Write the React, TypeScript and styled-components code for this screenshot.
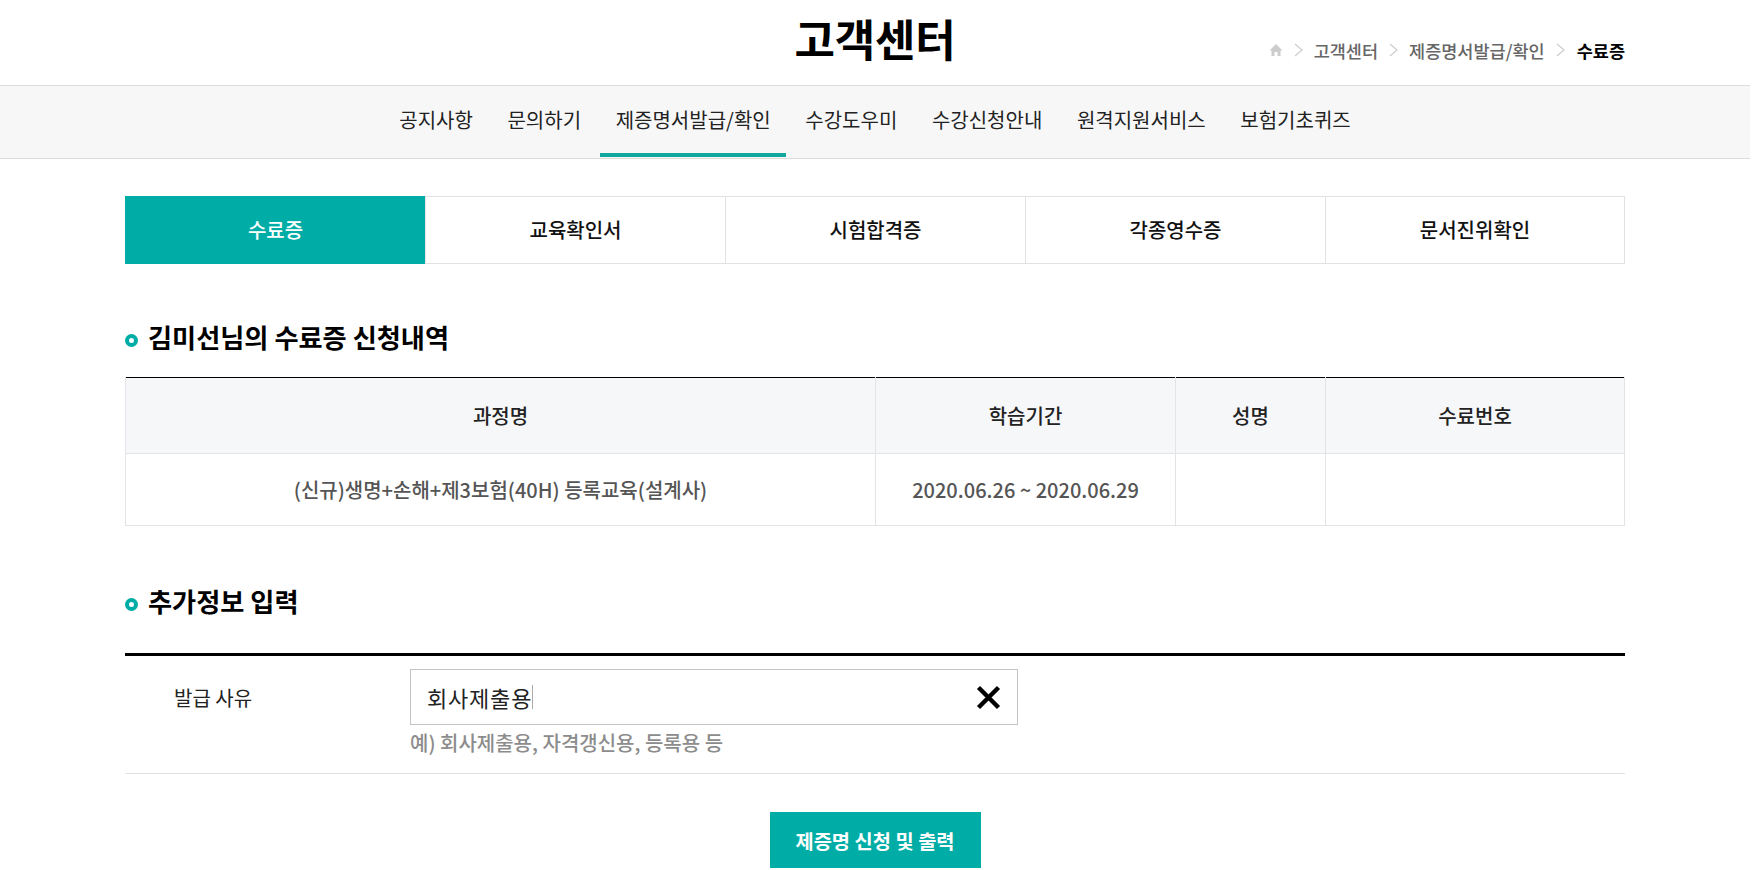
import styled, { createGlobalStyle } from 'styled-components';

const GlobalStyle = createGlobalStyle`
  html, body {
    margin: 0;
    padding: 0;
    background: #fff;
    font-family: "Noto Sans CJK KR", "Noto Sans", sans-serif;
    overflow: hidden;
  }
  * {
    box-sizing: border-box;
  }
`;

const Page = styled.div`
  width: 1750px;
  height: 870px;
  overflow: hidden;
`;

const Header = styled.header`
  height: 86px;
  border-bottom: 1px solid #dcdcdc;
`;

const HeaderInner = styled.div`
  width: 1500px;
  height: 85px;
  margin: 0 auto;
  display: flex;
  justify-content: center;
  position: relative;
`;

const PageTitle = styled.h1`
  margin: 0;
  padding-top: 6px;
  font-size: 44px;
  line-height: 64px;
  font-weight: 700;
  color: #000;
  letter-spacing: -0.2px;
`;

const Breadcrumb = styled.nav`
  position: absolute;
  right: 0;
  top: 38px;
  display: flex;
  align-items: center;
  height: 24px;
  font-size: 17.5px;
  font-weight: 500;
  color: #666;
`;

const CrumbSeparator = styled.svg`
  width: 9px;
  height: 14px;
  margin: 0 11px;
`;

const CrumbCurrent = styled.span`
  margin-left: 1px;
  color: #000;
  font-weight: 700;
`;

const SubNav = styled.nav`
  height: 73px;
  background: #f7f7f7;
  border-bottom: 1px solid #dcdcdc;
  display: flex;
  justify-content: center;
`;

const SubNavItem = styled.a<{ $active?: boolean }>`
  height: 71px;
  margin: 0 1.8px;
  padding: 0 15.5px 1px;
  display: flex;
  align-items: center;
  font-size: 20px;
  color: #222;
  border-bottom: 4px solid ${(p) => (p.$active ? '#13a89e' : 'transparent')};
`;

const Content = styled.main`
  width: 1500px;
  margin: 0 auto;
  padding-top: 37px;
`;

const Tabs = styled.div`
  display: grid;
  grid-template-columns: repeat(5, 300px);
  height: 68px;
`;

const Tab = styled.a<{ $active?: boolean }>`
  display: flex;
  align-items: center;
  justify-content: center;
  padding-bottom: 2px;
  font-size: 20px;
  font-weight: 500;
  color: ${(p) => (p.$active ? '#fff' : '#111')};
  background: ${(p) => (p.$active ? '#00ada6' : '#fff')};
  border: 1px solid ${(p) => (p.$active ? '#00ada6' : '#e2e2e2')};
  border-right: none;
  &:last-child {
    border-right: 1px solid #e2e2e2;
  }
`;

const SectionTitle = styled.h2<{ $top: number; $bottom: number }>`
  margin: ${(p) => p.$top}px 0 ${(p) => p.$bottom}px;
  height: 40px;
  display: flex;
  align-items: center;
  gap: 10px;
  font-size: 26.2px;
  font-weight: 700;
  color: #000;
`;

const TitleDot = styled.i`
  width: 13px;
  height: 13px;
  margin-top: 7px;
  border-radius: 50%;
  border: 4px solid #00ada6;
  background: #fff;
`;

const Table = styled.table`
  width: calc(100% - 1px);
  border-collapse: collapse;
  table-layout: fixed;
  border-top: 1px solid #000;
`;

const HeadCell = styled.th<{ $width: number }>`
  width: ${(p) => p.$width}px;
  height: 76px;
  padding: 0;
  background: #f6f7f9;
  border: 1px solid #e2e4e8;
  border-top: none;
  font-size: 20px;
  font-weight: 500;
  color: #222;
`;

const BodyCell = styled.td`
  height: 72px;
  padding: 0;
  border: 1px solid #e2e4e8;
  text-align: center;
  font-size: 20px;
  font-weight: 500;
  color: #555;
`;

const FormRow = styled.div`
  display: flex;
  height: 121px;
  border-top: 3px solid #000;
  border-bottom: 1px solid #e2e2e2;
  padding-top: 13px;
`;

const FormLabel = styled.div`
  width: 285px;
  padding-left: 49px;
  height: 56px;
  display: flex;
  align-items: center;
  font-size: 20px;
  color: #222;
`;

const FieldColumn = styled.div`
  width: 608px;
`;

const Field = styled.div`
  height: 56px;
  border: 1px solid #c4c4c4;
  padding: 0 16px;
  display: flex;
  align-items: center;
  justify-content: space-between;
  font-size: 22px;
  color: #222;
  letter-spacing: 0.8px;
`;

const FieldValue = styled.span`
  border-right: 1px solid #aaa;
  line-height: 24px;
`;

const ClearIcon = styled.svg`
  width: 25px;
  height: 25px;
`;

const Hint = styled.div`
  margin-top: 4px;
  font-size: 20px;
  line-height: 28px;
  color: #8c8c8c;
  font-weight: 500;
`;

const ButtonRow = styled.div`
  display: flex;
  justify-content: center;
  padding-top: 38px;
`;

const SubmitButton = styled.button`
  width: 211px;
  height: 56px;
  border: none;
  padding: 0;
  background: #00ada6;
  color: #fff;
  font-family: inherit;
  font-size: 19.8px;
  font-weight: 700;
`;

const Separator = () => (
  <CrumbSeparator viewBox="0 0 9 14">
    <path d="M1 1l7 6-7 6" fill="none" stroke="#ccc" strokeWidth="1.2" />
  </CrumbSeparator>
);

const navItems = ['공지사항', '문의하기', '제증명서발급/확인', '수강도우미', '수강신청안내', '원격지원서비스', '보험기초퀴즈'];
const tabItems = ['수료증', '교육확인서', '시험합격증', '각종영수증', '문서진위확인'];

const App = () => {
  return (
    <Page>
      <GlobalStyle />
      <Header>
        <HeaderInner>
          <PageTitle>고객센터</PageTitle>
          <Breadcrumb>
            <svg width="14" height="14" viewBox="0 0 14 14">
              <path d="M7 1L0.5 7.5H2.5V13H5.5V9H8.5V13H11.5V7.5H13.5z" fill="#ccc" />
            </svg>
            <Separator />
            <span>고객센터</span>
            <Separator />
            <span>제증명서발급/확인</span>
            <Separator />
            <CrumbCurrent>수료증</CrumbCurrent>
          </Breadcrumb>
        </HeaderInner>
      </Header>
      <SubNav>
        {navItems.map((item) => (
          <SubNavItem key={item} $active={item === '제증명서발급/확인'}>
            {item}
          </SubNavItem>
        ))}
      </SubNav>
      <Content>
        <Tabs>
          {tabItems.map((item, i) => (
            <Tab key={item} $active={i === 0}>
              {item}
            </Tab>
          ))}
        </Tabs>
        <SectionTitle $top={53} $bottom={20}>
          <TitleDot />
          김미선님의 수료증 신청내역
        </SectionTitle>
        <Table>
          <thead>
            <tr>
              <HeadCell $width={750}>과정명</HeadCell>
              <HeadCell $width={300}>학습기간</HeadCell>
              <HeadCell $width={150}>성명</HeadCell>
              <HeadCell $width={299}>수료번호</HeadCell>
            </tr>
          </thead>
          <tbody>
            <tr>
              <BodyCell>(신규)생명+손해+제3보험(40H) 등록교육(설계사)</BodyCell>
              <BodyCell>2020.06.26 ~ 2020.06.29</BodyCell>
              <BodyCell />
              <BodyCell />
            </tr>
          </tbody>
        </Table>
        <SectionTitle $top={55} $bottom={32}>
          <TitleDot />
          추가정보 입력
        </SectionTitle>
        <FormRow>
          <FormLabel>발급 사유</FormLabel>
          <FieldColumn>
            <Field>
              <FieldValue>회사제출용</FieldValue>
              <ClearIcon viewBox="0 0 25 25">
                <path d="M2.5 2.5L22.5 22.5M22.5 2.5L2.5 22.5" stroke="#000" strokeWidth="4.4" fill="none" />
              </ClearIcon>
            </Field>
            <Hint>예) 회사제출용, 자격갱신용, 등록용 등</Hint>
          </FieldColumn>
        </FormRow>
        <ButtonRow>
          <SubmitButton>제증명 신청 및 출력</SubmitButton>
        </ButtonRow>
      </Content>
    </Page>
  );
};

export default App;
